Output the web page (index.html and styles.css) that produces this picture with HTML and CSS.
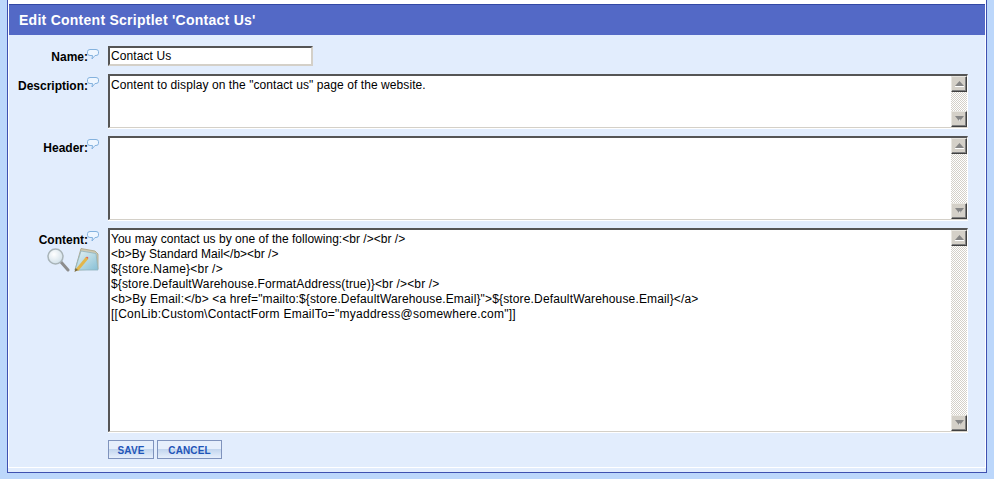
FILE: index.html
```html
<!DOCTYPE html>
<html lang="en">
<head>
<meta charset="utf-8">
<title>Edit Content Scriptlet</title>
<link rel="stylesheet" href="styles.css">
</head>
<body>
<svg class="defs" width="0" height="0" aria-hidden="true">
  <symbol id="bubble" viewBox="0 0 12 11">
    <path d="M3 .5h6q2.500 0 2.500 2.200v1.600q0 2.200-2.500 2.200H8L5 10 5.500 6.500H3Q.5 6.500.5 4.300V2.700Q.5.500 3 .5z" fill="#eef6ff" stroke="#84b2de"/>
  </symbol>
  <symbol id="up" viewBox="0 0 9 6"><path d="M4.500 0 9 5H0z" fill="#858585"/><path d="M0 5.500h9" stroke="#fff"/></symbol>
  <symbol id="down" viewBox="0 0 9 6"><path d="M0 0h9L4.500 5.500z" fill="#858585"/><path d="M4 3.500h1.500L4.500 6z" fill="#fff"/></symbol>
</svg>
<div class="panel">
  <div class="inner">
    <h1 class="title">Edit Content Scriptlet 'Contact Us'</h1>
    <form class="form">
      <div class="row row-first">
        <div class="label"><span>Name:</span><svg class="tip"><use href="#bubble"/></svg></div>
        <div class="input">Contact Us</div>
      </div>
      <div class="row">
        <div class="label"><span>Description:</span><svg class="tip"><use href="#bubble"/></svg></div>
        <div class="area area-desc">
          <div class="text"><div class="ls-desc">Content to display on the "contact us" page of the website.</div></div>
          <div class="bar">
            <div class="btn"><svg class="arrow"><use href="#up"/></svg></div>
            <div class="track"></div>
            <div class="btn"><svg class="arrow"><use href="#down"/></svg></div>
          </div>
        </div>
      </div>
      <div class="row">
        <div class="label"><span>Header:</span><svg class="tip"><use href="#bubble"/></svg></div>
        <div class="area area-head">
          <div class="text"></div>
          <div class="bar">
            <div class="btn"><svg class="arrow"><use href="#up"/></svg></div>
            <div class="track"></div>
            <div class="btn"><svg class="arrow"><use href="#down"/></svg></div>
          </div>
        </div>
      </div>
      <div class="row">
        <div class="label-stack">
          <div class="label"><span>Content:</span><svg class="tip"><use href="#bubble"/></svg></div>
          <div class="tools">
            <svg class="tool-search" viewBox="0 0 23 24" width="23" height="24">
              <defs><radialGradient id="lens" cx=".4" cy=".35" r=".7"><stop offset="0" stop-color="#ffffff"/><stop offset="1" stop-color="#cfdfe8"/></radialGradient></defs>
              <path d="M14 14l7 8" stroke="#8d8d8d" stroke-width="3" stroke-linecap="round"/>
              <circle cx="8.500" cy="8.500" r="7.500" fill="url(#lens)" stroke="#a9b4b8" stroke-width="1.500"/>
            </svg>
            <svg class="tool-edit" viewBox="0 0 25 24" width="25" height="24">
              <defs><linearGradient id="pad" x1="0" y1="0" x2="1" y2="1"><stop offset="0" stop-color="#e8f3f2"/><stop offset="1" stop-color="#86bfd6"/></linearGradient></defs>
              <path d="M7 .5 21 3l3 3v15l-23 1z" fill="#cfc9b2" stroke="#a8a283" stroke-width=".8"/>
              <path d="M7 3 22 5.500 24 22H1z" fill="url(#pad)" stroke="#8fb2bd" stroke-width=".8"/>
              <circle cx="13" cy="10" r="1.300" fill="#e25b5b"/>
              <path d="M13 10 3 22" stroke="#e2b64b" stroke-width="3"/>
              <path d="M.5 24l1-4 2.500 2z" fill="#7d6a3a"/>
            </svg>
          </div>
        </div>
        <div class="area area-content">
          <div class="text">
            <div class="ls-1">You may contact us by one of the following:&lt;br /&gt;&lt;br /&gt;</div>
            <div class="ls-2">&lt;b&gt;By Standard Mail&lt;/b&gt;&lt;br /&gt;</div>
            <div class="ls-3">${store.Name}&lt;br /&gt;</div>
            <div class="ls-4">${store.DefaultWarehouse.FormatAddress(true)}&lt;br /&gt;&lt;br /&gt;</div>
            <div class="ls-5">&lt;b&gt;By Email:&lt;/b&gt; &lt;a href="mailto:${store.DefaultWarehouse.Email}"&gt;${store.DefaultWarehouse.Email}&lt;/a&gt;</div>
            <div class="ls-6">[[ConLib:Custom\ContactForm EmailTo="myaddress@somewhere.com"]]</div>
          </div>
          <div class="bar">
            <div class="btn"><svg class="arrow"><use href="#up"/></svg></div>
            <div class="track"></div>
            <div class="btn"><svg class="arrow"><use href="#down"/></svg></div>
          </div>
        </div>
      </div>
      <div class="actions">
        <button type="button" class="action save">SAVE</button>
        <button type="button" class="action cancel">CANCEL</button>
      </div>
    </form>
  </div>
</div>
</body>
</html>
```

FILE: styles.css
```css
html, body { margin: 0; height: 100%; }
body {
  background: #bcd7fb;
  font-family: "Liberation Sans", Arial, sans-serif;
  font-size: 12px;
  color: #000;
  overflow: hidden;
}
.defs { position: absolute; }
.panel {
  box-sizing: border-box;
  width: 980px;
  height: 473px;
  margin-left: 7px;
  padding-bottom: 4px;
  background: #e2edfd;
  border-left: 1px solid #3f51b0;
  border-right: 1px solid #3f51b0;
  border-bottom: 1px solid #3f51b0;
}
.inner {
  height: 468px;
  box-sizing: border-box;
  padding: 4px 1px 1px;
  background: #fff;
}
.title {
  box-sizing: border-box;
  height: 31px;
  margin: 0;
  padding: 0 0 0 10px;
  border-top: 1px solid #3348a4;
  background: #5369c6;
  color: #fff;
  font-size: 14px;
  font-weight: bold;
  line-height: 30px;
  letter-spacing: .26px;
}
.form {
  box-sizing: border-box;
  height: 432px;
  background: #e2edfd;
  padding: 11px 0 0;
}
.row { display: flex; margin-bottom: 7px; }
.row-first { margin-bottom: 8px; }
.label {
  box-sizing: border-box;
  width: 90px;
  display: flex;
  justify-content: flex-end;
  align-items: flex-start;
  font-weight: bold;
  line-height: 15px;
  padding-top: 4px;
  margin-right: 9px;
}
.label span { display: block; padding-top: 1px; }
.row-first .label span { padding-top: 0; }
.tip { width: 12px; height: 11px; margin: -1px 0 0 -1px; flex: none; }
.label-stack { width: 99px; }
.tools { display: flex; justify-content: flex-end; gap: 4px; padding-right: 9px; }
.input {
  box-sizing: border-box;
  width: 205px;
  height: 20px;
  background: #fff;
  border: 2px solid;
  border-color: #555 #d4d0c8 #d4d0c8 #555;
  padding: 0 1px;
  line-height: 17px;
  letter-spacing: .1px;
  white-space: nowrap;
}
.area {
  box-sizing: border-box;
  width: 860px;
  display: flex;
  margin-bottom: 1px;
  background: #fff;
  border-style: solid;
  border-width: 2px 1px 1px 2px;
  border-color: #555 #fff #d4d0c8 #555;
  box-shadow: 0 1px 0 #fff;
}
.area-desc { height: 54px; }
.area-head { height: 84px; }
.area-content { height: 204px; }
.text {
  flex: 1;
  padding: 2px 1px;
  line-height: 15px;
  white-space: nowrap;
}
.ls-desc { letter-spacing: .08px; }
.ls-1 { letter-spacing: .02px; }
.ls-2 { letter-spacing: 0; }
.ls-3 { letter-spacing: .2px; }
.ls-4 { letter-spacing: .14px; }
.ls-5 { letter-spacing: .15px; }
.ls-6 { letter-spacing: .25px; }
.bar { width: 16px; flex: none; display: flex; flex-direction: column; }
.track {
  flex: 1;
  background-color: #fff;
  background-image: conic-gradient(#d4d0c8 25%, #fff 0 50%, #d4d0c8 0 75%, #fff 0);
  background-size: 2px 2px;
}
.btn {
  box-sizing: border-box;
  height: 16px;
  flex: none;
  background: #d4d0c8;
  border: 1px solid;
  border-color: #e8e6e0 #404040 #404040 #e8e6e0;
  box-shadow: inset -1px -1px 0 #808080;
  display: flex;
  align-items: center;
  justify-content: center;
}
.arrow { width: 9px; height: 6px; display: block; }
.actions { display: flex; gap: 3px; padding-left: 99px; }
.action {
  box-sizing: border-box;
  height: 19px;
  margin: 0;
  padding: 1px 0 0;
  border: 1px solid #7f93bd;
  background: linear-gradient(#e6effc 0 50%, #c3d6ee 50%, #e6effc);
  color: #1f55b8;
  font-family: "Liberation Sans", Arial, sans-serif;
  font-size: 10px;
  font-weight: bold;
  letter-spacing: .1px;
}
.save { width: 46px; }
.cancel { width: 65px; }
```
